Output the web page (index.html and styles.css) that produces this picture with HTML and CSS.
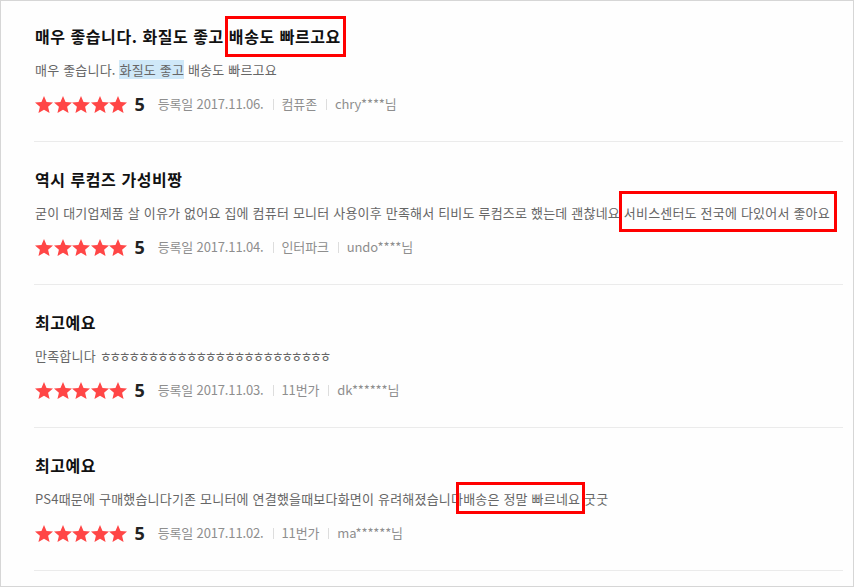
FILE: index.html
```html
<!DOCTYPE html>
<html lang="ko">
<head>
<meta charset="utf-8">
<title>상품평</title>
<link rel="stylesheet" href="styles.css">
</head>
<body>
<div class="frame">
  <ul class="reviews">
    <li class="review">
      <h3 class="review-title">매우 좋습니다. 화질도 좋고 <span class="mark mark-1">배송도 빠르고요</span></h3>
      <p class="review-text">매우 좋습니다. <span class="selected">화질도 좋고</span> 배송도 빠르고요</p>
      <div class="review-meta">
        <span class="stars"><svg viewBox="1 1 22 20.8"><polygon points="12,1 15.1,8.3 23,8.9 17,14.1 18.8,21.8 12,17.7 5.2,21.8 7,14.1 1,8.9 8.9,8.3"/></svg><svg viewBox="1 1 22 20.8"><polygon points="12,1 15.1,8.3 23,8.9 17,14.1 18.8,21.8 12,17.7 5.2,21.8 7,14.1 1,8.9 8.9,8.3"/></svg><svg viewBox="1 1 22 20.8"><polygon points="12,1 15.1,8.3 23,8.9 17,14.1 18.8,21.8 12,17.7 5.2,21.8 7,14.1 1,8.9 8.9,8.3"/></svg><svg viewBox="1 1 22 20.8"><polygon points="12,1 15.1,8.3 23,8.9 17,14.1 18.8,21.8 12,17.7 5.2,21.8 7,14.1 1,8.9 8.9,8.3"/></svg><svg viewBox="1 1 22 20.8"><polygon points="12,1 15.1,8.3 23,8.9 17,14.1 18.8,21.8 12,17.7 5.2,21.8 7,14.1 1,8.9 8.9,8.3"/></svg></span>
        <span class="score">5</span>
        <span class="meta-item">등록일 2017.11.06.</span>
        <span class="meta-item">컴퓨존</span>
        <span class="meta-item">chry****님</span>
      </div>
    </li>
    <li class="review">
      <h3 class="review-title">역시 루컴즈 가성비짱</h3>
      <p class="review-text">굳이 대기업제품 살 이유가 없어요 집에 컴퓨터 모니터 사용이후 만족해서 티비도 루컴즈로 했는데 괜찮네요 <span class="mark mark-2">서비스센터도 전국에 다있어서 좋아요</span></p>
      <div class="review-meta">
        <span class="stars"><svg viewBox="1 1 22 20.8"><polygon points="12,1 15.1,8.3 23,8.9 17,14.1 18.8,21.8 12,17.7 5.2,21.8 7,14.1 1,8.9 8.9,8.3"/></svg><svg viewBox="1 1 22 20.8"><polygon points="12,1 15.1,8.3 23,8.9 17,14.1 18.8,21.8 12,17.7 5.2,21.8 7,14.1 1,8.9 8.9,8.3"/></svg><svg viewBox="1 1 22 20.8"><polygon points="12,1 15.1,8.3 23,8.9 17,14.1 18.8,21.8 12,17.7 5.2,21.8 7,14.1 1,8.9 8.9,8.3"/></svg><svg viewBox="1 1 22 20.8"><polygon points="12,1 15.1,8.3 23,8.9 17,14.1 18.8,21.8 12,17.7 5.2,21.8 7,14.1 1,8.9 8.9,8.3"/></svg><svg viewBox="1 1 22 20.8"><polygon points="12,1 15.1,8.3 23,8.9 17,14.1 18.8,21.8 12,17.7 5.2,21.8 7,14.1 1,8.9 8.9,8.3"/></svg></span>
        <span class="score">5</span>
        <span class="meta-item">등록일 2017.11.04.</span>
        <span class="meta-item">인터파크</span>
        <span class="meta-item">undo****님</span>
      </div>
    </li>
    <li class="review">
      <h3 class="review-title">최고예요</h3>
      <p class="review-text">만족합니다 <span class="jamo">ㅎㅎㅎㅎㅎㅎㅎㅎㅎㅎㅎㅎㅎㅎㅎㅎㅎㅎㅎㅎㅎㅎㅎㅎ</span></p>
      <div class="review-meta">
        <span class="stars"><svg viewBox="1 1 22 20.8"><polygon points="12,1 15.1,8.3 23,8.9 17,14.1 18.8,21.8 12,17.7 5.2,21.8 7,14.1 1,8.9 8.9,8.3"/></svg><svg viewBox="1 1 22 20.8"><polygon points="12,1 15.1,8.3 23,8.9 17,14.1 18.8,21.8 12,17.7 5.2,21.8 7,14.1 1,8.9 8.9,8.3"/></svg><svg viewBox="1 1 22 20.8"><polygon points="12,1 15.1,8.3 23,8.9 17,14.1 18.8,21.8 12,17.7 5.2,21.8 7,14.1 1,8.9 8.9,8.3"/></svg><svg viewBox="1 1 22 20.8"><polygon points="12,1 15.1,8.3 23,8.9 17,14.1 18.8,21.8 12,17.7 5.2,21.8 7,14.1 1,8.9 8.9,8.3"/></svg><svg viewBox="1 1 22 20.8"><polygon points="12,1 15.1,8.3 23,8.9 17,14.1 18.8,21.8 12,17.7 5.2,21.8 7,14.1 1,8.9 8.9,8.3"/></svg></span>
        <span class="score">5</span>
        <span class="meta-item">등록일 2017.11.03.</span>
        <span class="meta-item">11번가</span>
        <span class="meta-item">dk******님</span>
      </div>
    </li>
    <li class="review">
      <h3 class="review-title">최고예요</h3>
      <p class="review-text">PS4때문에 구매했습니다기존 모니터에 연결했을때보다화면이 유려해졌습니다<span class="mark mark-3">배송은 정말 빠르네요</span> 굿굿</p>
      <div class="review-meta">
        <span class="stars"><svg viewBox="1 1 22 20.8"><polygon points="12,1 15.1,8.3 23,8.9 17,14.1 18.8,21.8 12,17.7 5.2,21.8 7,14.1 1,8.9 8.9,8.3"/></svg><svg viewBox="1 1 22 20.8"><polygon points="12,1 15.1,8.3 23,8.9 17,14.1 18.8,21.8 12,17.7 5.2,21.8 7,14.1 1,8.9 8.9,8.3"/></svg><svg viewBox="1 1 22 20.8"><polygon points="12,1 15.1,8.3 23,8.9 17,14.1 18.8,21.8 12,17.7 5.2,21.8 7,14.1 1,8.9 8.9,8.3"/></svg><svg viewBox="1 1 22 20.8"><polygon points="12,1 15.1,8.3 23,8.9 17,14.1 18.8,21.8 12,17.7 5.2,21.8 7,14.1 1,8.9 8.9,8.3"/></svg><svg viewBox="1 1 22 20.8"><polygon points="12,1 15.1,8.3 23,8.9 17,14.1 18.8,21.8 12,17.7 5.2,21.8 7,14.1 1,8.9 8.9,8.3"/></svg></span>
        <span class="score">5</span>
        <span class="meta-item">등록일 2017.11.02.</span>
        <span class="meta-item">11번가</span>
        <span class="meta-item">ma******님</span>
      </div>
    </li>
  </ul>
</div>
</body>
</html>
```
FILE: styles.css
```css
html, body {
  margin: 0;
  padding: 0;
  background: #ffffff;
}

body {
  font-family: "Noto Sans CJK KR", "Noto Sans", sans-serif;
}

.frame {
  width: 854px;
  height: 587px;
  box-sizing: border-box;
  border: 1px solid #d6d6d6;
  background: #fefefe;
  overflow: hidden;
  padding: 0 10px 0 33px;
}

.reviews {
  list-style: none;
  margin: -2px 0 0 0;
  padding: 0;
}

.review {
  height: 143px;
  box-sizing: border-box;
  border-bottom: 1px solid #ebebeb;
  padding: 26px 0 0 1px;
}

.review-title {
  margin: 0;
  font-size: 16px;
  line-height: 22px;
  font-weight: 700;
  color: #111111;
  letter-spacing: 0.55px;
  white-space: nowrap;
}

.review-text {
  margin: 13px 0 0 0;
  font-size: 13px;
  line-height: 20px;
  color: #666666;
  letter-spacing: 0.2px;
  white-space: nowrap;
}

.jamo {
  letter-spacing: -2.4px;
}

.selected {
  background: #cfe8f8;
}

.mark {
  position: relative;
}

.mark::after {
  content: "";
  position: absolute;
  border: 3px solid #ff0000;
  pointer-events: none;
}

.mark-1::after {
  top: -8px;
  bottom: -9px;
  left: -4px;
  right: -5px;
}

.mark-2::after {
  top: -12px;
  bottom: -10px;
  left: -5px;
  right: -7px;
}

.mark-3::after {
  top: -7px;
  bottom: -6px;
  left: -7px;
  right: -5px;
}

.review-meta {
  display: flex;
  align-items: center;
  height: 24px;
  margin-top: 12px;
}

.stars {
  display: flex;
  gap: 0.6px;
}

.stars svg {
  width: 18px;
  height: 17px;
  fill: #ff4646;
  display: block;
}

.score {
  margin-left: 7px;
  font-size: 18px;
  font-weight: 700;
  color: #222222;
  line-height: 24px;
  font-family: "Noto Sans", "Noto Sans CJK KR", sans-serif;
}

.meta-item {
  font-size: 13px;
  line-height: 20px;
  color: #8e8e8e;
  letter-spacing: -0.15px;
  display: flex;
  align-items: center;
}

.score + .meta-item {
  margin-left: 13px;
}

.meta-item + .meta-item::before {
  content: "";
  width: 1px;
  height: 11px;
  background: #dddddd;
  margin: 0 8px 0 9px;
}
```
